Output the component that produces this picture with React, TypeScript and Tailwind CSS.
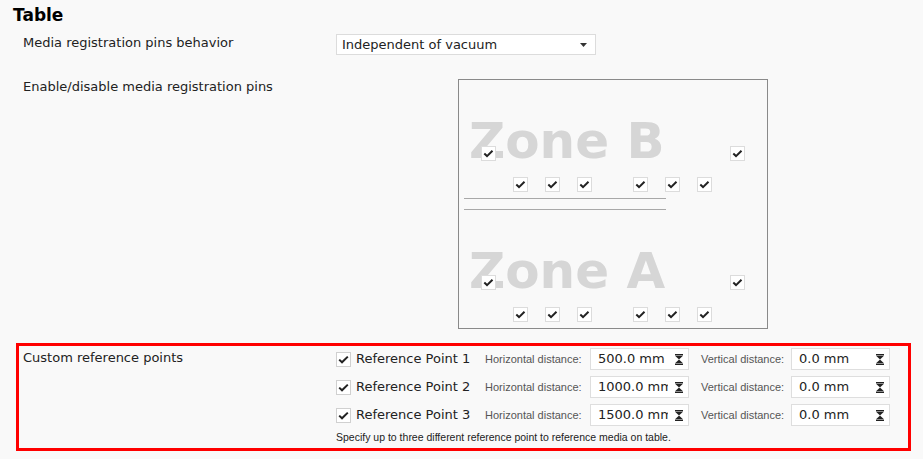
import React from "react";

const Box = ({ className = "" }: { className?: string }) => (
  <div className={`w-[15px] h-[15px] bg-white border border-[#dcdcdc] flex items-center justify-center ${className}`}>
    <svg width="13" height="13" viewBox="0 0 13 13" className="block">
      <path d="M2.3 6.6 L5 9.1 L10.5 3.7" fill="none" stroke="#222" strokeWidth="2" />
    </svg>
  </div>
);

const Spinner = () => (
  <svg width="8" height="11" viewBox="0 0 8 11" className="block">
    <rect x="0" y="0" width="8" height="1.5" fill="#222" />
    <path d="M0.3 2.1 L7.7 2.1 L4 5.5 Z" fill="#222" />
    <path d="M0.3 8.9 L7.7 8.9 L4 5.5 Z" fill="#222" />
    <rect x="0" y="9.5" width="8" height="1.5" fill="#222" />
  </svg>
);

const NumInput = ({ value }: { value: string }) => (
  <div className="w-[99px] h-[22px] bg-white border border-[#dedede] flex items-center pl-[7px] pr-[5px]">
    <div className="w-[70px] overflow-hidden whitespace-nowrap leading-[16px] text-[13px] text-[#222]">{value}</div>
    <div className="ml-auto">
      <Spinner />
    </div>
  </div>
);

const RefRow = ({ n, h }: { n: number; h: string }) => (
  <div className="flex items-center h-[22px]">
    <div className="w-[15px] h-[15px] bg-white border border-[#d0d0d0] flex items-center justify-center">
      <svg width="13" height="13" viewBox="0 0 13 13" className="block">
        <path d="M2.2 6.6 L5 9.3 L10.8 3.6" fill="none" stroke="#222" strokeWidth="2" />
      </svg>
    </div>
    <div className="w-[134px] pl-[5px] text-[13px] leading-[16px] text-[#222] whitespace-nowrap">Reference Point {n}</div>
    <div className="w-[105px] text-[11px] text-[#555] font-['Liberation_Sans',sans-serif] whitespace-nowrap">Horizontal distance:</div>
    <NumInput value={h} />
    <div className="w-[90px] ml-[12px] text-[11px] text-[#555] font-['Liberation_Sans',sans-serif] whitespace-nowrap">Vertical distance:</div>
    <NumInput value="0.0 mm" />
  </div>
);

const pinRow = [54, 86, 118, 174, 206, 238];

export default function App() {
  return (
    <div className="w-[923px] h-[459px] bg-[#f9f9f9] overflow-hidden font-['DejaVu_Sans',sans-serif] text-[13px] text-[#222]">
      <div className="pl-[13px] pt-[4px] text-[17px] font-bold leading-[22px] text-black">Table</div>

      <div className="flex mt-[8px]">
        <div className="w-[336px] pl-[23px] pt-[1px] leading-[16px]">Media registration pins behavior</div>
        <div className="w-[260px] h-[21px] bg-white border border-[#dcdcdc] flex items-center pl-[5px] pr-[8px]">
          <span className="leading-[19px]">Independent of vacuum</span>
          <svg width="7" height="4" viewBox="0 0 7 4" className="ml-auto block">
            <path d="M0 0 L7 0 L3.5 4 Z" fill="#333" />
          </svg>
        </div>
      </div>

      <div className="flex mt-[24px]">
        <div className="w-[458px] pl-[23px] leading-[16px]">Enable/disable media registration pins</div>
        <div className="relative w-[310px] h-[250px] border border-[#8a8a8a]">
          <div className="absolute left-[10px] top-[36px] text-[50px] leading-[50px] font-bold text-[#d6d6d6] whitespace-nowrap">Zone B</div>
          <div className="absolute left-[10px] top-[166px] text-[50px] leading-[50px] font-bold text-[#d6d6d6] whitespace-nowrap">Zone A</div>

          <Box className="absolute left-[22px] top-[66px]" />
          <Box className="absolute left-[271px] top-[66px]" />
          {pinRow.map((x) => (
            <div key={"b" + x} className="absolute top-[97px]" style={{ left: x }}>
              <Box />
            </div>
          ))}

          <div className="absolute left-[5px] top-[118px] w-[202px] h-px bg-[#a8a8a8]" />
          <div className="absolute left-[5px] top-[129px] w-[202px] h-px bg-[#a8a8a8]" />

          <Box className="absolute left-[22px] top-[195px]" />
          <Box className="absolute left-[271px] top-[195px]" />
          {pinRow.map((x) => (
            <div key={"a" + x} className="absolute top-[227px]" style={{ left: x }}>
              <Box />
            </div>
          ))}
        </div>
      </div>

      <div className="ml-[16px] mt-[14px] w-[895px] h-[108px] border-[3px] border-[#ff0000] flex">
        <div className="w-[317px] pl-[4px] pt-[4px] leading-[16px]">Custom reference points</div>
        <div className="pt-[2px] flex flex-col gap-[6px]">
          <RefRow n={1} h="500.0 mm" />
          <RefRow n={2} h="1000.0 mm" />
          <RefRow n={3} h="1500.0 mm" />
          <div className="-mt-[1px] text-[10.5px] leading-[12px] text-[#222] font-['Liberation_Sans',sans-serif] whitespace-nowrap">
            Specify up to three different reference point to reference media on table.
          </div>
        </div>
      </div>
    </div>
  );
}
